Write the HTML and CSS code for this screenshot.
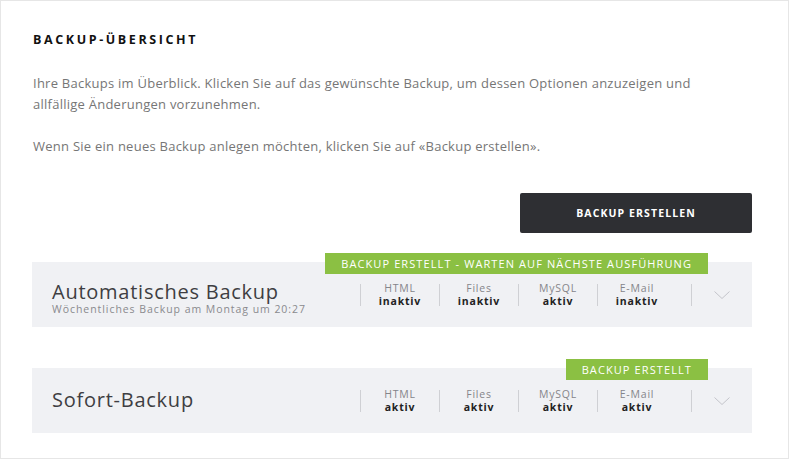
FILE: index.html
```html
<!DOCTYPE html>
<html lang="de">
<head>
<meta charset="utf-8">
<title>Backup-Übersicht</title>
<link rel="stylesheet" href="styles.css">
</head>
<body>
<div class="frame">
  <h1 class="title">BACKUP-ÜBERSICHT</h1>
  <p class="intro">Ihre Backups im Überblick. Klicken Sie auf das gewünschte Backup, um dessen Optionen anzuzeigen und allfällige Änderungen vorzunehmen.</p>
  <p class="intro">Wenn Sie ein neues Backup anlegen möchten, klicken Sie auf «Backup erstellen».</p>
  <div class="actions"><button class="btn">BACKUP ERSTELLEN</button></div>
  <div class="list">
    <div class="card">
      <span class="badge">BACKUP ERSTELLT - WARTEN AUF NÄCHSTE AUSFÜHRUNG</span>
      <div class="card-info">
        <div class="card-title">Automatisches Backup</div>
        <div class="card-sub">Wöchentliches Backup am Montag um 20:27</div>
      </div>
      <div class="stats">
        <div class="stat"><span class="label">HTML</span><span class="value">inaktiv</span></div>
        <div class="stat"><span class="label">Files</span><span class="value">inaktiv</span></div>
        <div class="stat"><span class="label">MySQL</span><span class="value">aktiv</span></div>
        <div class="stat"><span class="label">E-Mail</span><span class="value">inaktiv</span></div>
      </div>
      <div class="toggle"><svg width="16" height="8" viewBox="0 0 16 8"><path d="M0.5 0.5 L8 7.5 L15.5 0.5" fill="none" stroke="#c4c5ca" stroke-width="1"/></svg></div>
    </div>
    <div class="card">
      <span class="badge">BACKUP ERSTELLT</span>
      <div class="card-info card-info--single">
        <div class="card-title">Sofort-Backup</div>
      </div>
      <div class="stats">
        <div class="stat"><span class="label">HTML</span><span class="value">aktiv</span></div>
        <div class="stat"><span class="label">Files</span><span class="value">aktiv</span></div>
        <div class="stat"><span class="label">MySQL</span><span class="value">aktiv</span></div>
        <div class="stat"><span class="label">E-Mail</span><span class="value">aktiv</span></div>
      </div>
      <div class="toggle"><svg width="16" height="8" viewBox="0 0 16 8"><path d="M0.5 0.5 L8 7.5 L15.5 0.5" fill="none" stroke="#c4c5ca" stroke-width="1"/></svg></div>
    </div>
  </div>
</div>
</body>
</html>
```
FILE: styles.css
```css
* { box-sizing: border-box; }
html, body { margin: 0; padding: 0; background: #fff; }
body { font-family: "Open Sans", "DejaVu Sans", sans-serif; }

.frame {
  width: 789px;
  height: 459px;
  border: 1px solid #e6e6e6;
  padding: 31px 36px 0 31px;
}

.title {
  margin: 0;
  font-size: 12.5px;
  line-height: 16px;
  font-weight: 700;
  letter-spacing: 2.6px;
  color: #111;
  padding-left: 1px;
}

.intro {
  max-width: 700px;
  margin: 25px 0 0 1px;
  font-size: 13px;
  line-height: 21px;
  color: #767676;
  letter-spacing: 0.25px;
}
.intro + .intro { margin-top: 21px; }

.actions {
  display: flex;
  justify-content: flex-end;
  margin-top: 36px;
}
.btn {
  width: 232px;
  height: 40px;
  border: 0;
  border-radius: 2px;
  background: #2e2f33;
  color: #fff;
  font-family: inherit;
  font-size: 10.5px;
  font-weight: 700;
  letter-spacing: 1.1px;
}

.list {
  display: flex;
  flex-direction: column;
  gap: 41px;
  margin-top: 29px;
}

.card {
  position: relative;
  display: flex;
  align-items: center;
  height: 65px;
  background: #f0f1f4;
  padding-left: 20px;
}

.badge {
  position: absolute;
  top: -9px;
  right: 44px;
  height: 21px;
  line-height: 21px;
  padding: 0 16px;
  background: #8bc043;
  color: #fff;
  font-size: 11px;
  letter-spacing: 1.1px;
}

.card-info { flex: 1; padding-top: 8px; }
.card-info--single { padding-top: 0; margin-top: -3px; }
.card-title {
  font-size: 20px;
  line-height: 21px;
  font-weight: 400;
  color: #3e3e42;
  letter-spacing: 0.75px;
}
.card-sub {
  margin-top: 1px;
  font-size: 10.5px;
  line-height: 13px;
  color: #8a8a8e;
  letter-spacing: 0.95px;
}

.stats { display: flex; }
.stat {
  width: 79px;
  height: 22px;
  border-left: 1px solid #cfd0d4;
  display: flex;
  flex-direction: column;
  align-items: center;
  justify-content: center;
  text-align: center;
}
.label {
  font-size: 10.5px;
  line-height: 13px;
  color: #85858a;
  letter-spacing: 0.8px;
}
.value {
  font-size: 10.5px;
  line-height: 13px;
  font-weight: 700;
  color: #222;
  letter-spacing: 0.8px;
}

.toggle {
  width: 61px;
  height: 22px;
  margin-left: 15px;
  border-left: 1px solid #cfd0d4;
  display: flex;
  align-items: center;
  justify-content: center;
}
.toggle svg { display: block; }
```
